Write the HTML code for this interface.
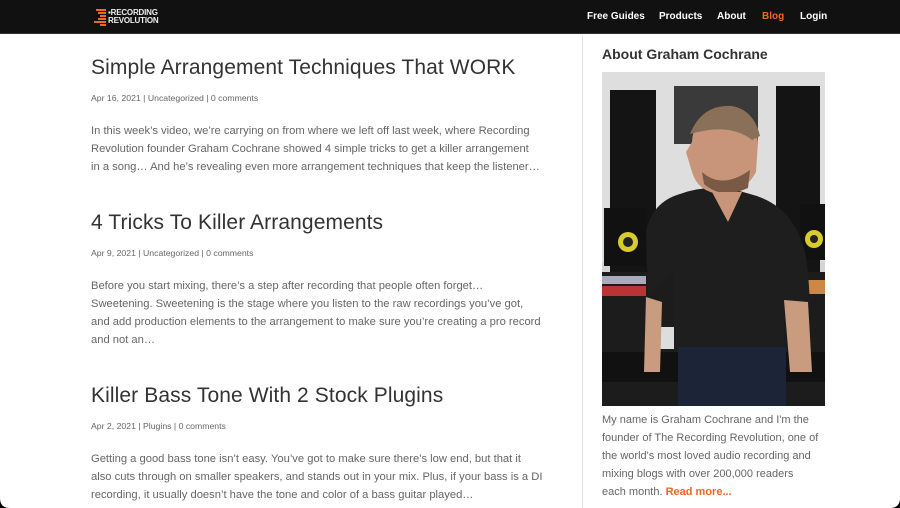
<!DOCTYPE html>
<html><head><meta charset="utf-8"><style>
*{margin:0;padding:0;box-sizing:border-box}
html,body{width:900px;height:508px;overflow:hidden;background:#fff;font-family:"Liberation Sans",sans-serif}
.hdr{position:absolute;left:0;top:0;width:900px;height:34px;background:#111;border-bottom:1px solid #333}
.logo{position:absolute;left:94px;top:9px}
.logo .t{position:absolute;left:14px;top:0;color:#eee;font-size:8px;line-height:8px;font-weight:bold;letter-spacing:-0.2px;white-space:nowrap}
.nav{position:absolute;top:11px;font-size:10px;font-weight:bold;color:#fff}
.divider{position:absolute;left:582px;top:35px;width:1px;height:473px;background:#e4e4e4}
.post{position:absolute;left:91px;width:452px}
.post h2{font-size:21px;font-weight:normal;color:#333;letter-spacing:0.1px;white-space:nowrap}
.meta{font-size:8.7px;color:#666;margin-top:13px}
.ex{font-size:11.2px;line-height:18px;color:#666;margin-top:19px}
.side{position:absolute;left:602px}
.side h3{position:absolute;left:0;top:46px;font-size:14px;font-weight:bold;color:#333;white-space:nowrap}
.bio{position:absolute;left:602px;top:411px;width:222px;font-size:11px;line-height:18px;color:#666}
.bio b{color:#f26522}
.c{position:absolute;width:10px;height:10px;bottom:0}
</style></head><body>
<div class="hdr">
 <div class="logo">
  <svg width="13" height="17" viewBox="0 0 13 17"><g fill="#f26522"><rect x="2" y="0" width="10" height="2"/><rect x="4" y="3" width="8" height="2"/><rect x="6" y="6" width="6" height="2"/><rect x="4" y="9" width="8" height="2"/><rect x="0" y="12" width="12" height="2"/><rect x="6" y="15" width="6" height="2"/></g></svg>
  <div class="t">▪RECORDING<br>REVOLUTION</div>
 </div>
 <div class="nav" style="left:587px">Free Guides</div>
 <div class="nav" style="left:659px">Products</div>
 <div class="nav" style="left:717px">About</div>
 <div class="nav" style="left:762px;color:#f26522">Blog</div>
 <div class="nav" style="left:800px">Login</div>
</div>
<div class="divider"></div>

<div class="post" style="top:56px"><h2>Simple Arrangement Techniques That WORK</h2>
<div class="meta">Apr 16, 2021 | Uncategorized | 0 comments</div>
<div class="ex">In this week’s video, we’re carrying on from where we left off last week, where Recording Revolution founder Graham Cochrane showed 4 simple tricks to get a killer arrangement<br>in a song… And he’s revealing even more arrangement techniques that keep the listener…</div></div>

<div class="post" style="top:211px"><h2>4 Tricks To Killer Arrangements</h2>
<div class="meta">Apr 9, 2021 | Uncategorized | 0 comments</div>
<div class="ex">Before you start mixing, there’s a step after recording that people often forget…<br>Sweetening. Sweetening is the stage where you listen to the raw recordings you’ve got, and add production elements to the arrangement to make sure you’re creating a pro record and not an…</div></div>

<div class="post" style="top:384px"><h2>Killer Bass Tone With 2 Stock Plugins</h2>
<div class="meta">Apr 2, 2021 | Plugins | 0 comments</div>
<div class="ex">Getting a good bass tone isn’t easy. You’ve got to make sure there’s low end, but that it also cuts through on smaller speakers, and stands out in your mix. Plus, if your bass is a DI recording, it usually doesn’t have the tone and color of a bass guitar played…</div></div>

<div class="side"><h3>About Graham Cochrane</h3></div>
<svg style="position:absolute;left:602px;top:72px" width="223" height="334" viewBox="0 0 223 334">
 <rect width="223" height="334" fill="#d4d4d4"/>
 <rect x="0" y="0" width="223" height="190" fill="#dedede"/>
 <rect x="8" y="18" width="46" height="190" fill="#141414"/>
 <rect x="174" y="14" width="44" height="190" fill="#141414"/>
 <rect x="72" y="14" width="84" height="58" fill="#3a3a3a"/>
 <rect x="0" y="200" width="223" height="134" fill="#1c1c1c"/>
 <rect x="2" y="136" width="42" height="58" fill="#111"/>
 <circle cx="26" cy="170" r="10" fill="#d8cc2a"/><circle cx="26" cy="170" r="5" fill="#222"/>
 <rect x="198" y="132" width="25" height="56" fill="#111"/>
 <circle cx="212" cy="167" r="9" fill="#d8cc2a"/><circle cx="212" cy="167" r="4" fill="#222"/>
 <rect x="0" y="214" width="44" height="10" fill="#b33"/>
 <rect x="0" y="204" width="44" height="8" fill="#aab"/>
 <rect x="200" y="208" width="23" height="14" fill="#c84"/>
 <rect x="58" y="255" width="110" height="22" fill="#ddd"/>
 <rect x="0" y="280" width="223" height="30" fill="#111"/>
 <path d="M78 122 Q110 110 148 122 Q200 135 206 200 L208 230 L182 228 L182 280 L72 280 L72 200 L46 225 L44 160 Q50 130 78 122Z" fill="#1e1e1e"/>
 <rect x="76" y="275" width="108" height="59" fill="#1c2438"/>
 <path d="M44 225 L60 230 L58 300 L42 300Z" fill="#c99c80"/>
 <path d="M182 228 L206 230 L210 300 L188 300Z" fill="#c99c80"/>
 <path d="M90 70 Q92 40 122 38 Q152 40 156 70 L154 100 Q144 120 118 122 Q96 120 90 100 L84 80Z" fill="#c9957a"/>
 <path d="M88 62 Q100 32 130 34 Q152 38 158 64 L150 68 Q130 52 96 60Z" fill="#8a7058"/>
 <path d="M100 100 Q120 118 148 98 L146 116 Q120 128 102 112Z" fill="#7a5a44"/>
 <path d="M110 120 L140 120 L126 150Z" fill="#c9957a"/>
</svg>
<div class="bio">My name is Graham Cochrane and I'm the founder of The Recording Revolution, one of the world's most loved audio recording and mixing blogs with over 200,000 readers<br>each month. <b>Read more...</b></div>
<svg class="c" style="left:0" viewBox="0 0 10 10"><path d="M0 0 Q0 10 10 10 L0 10Z" fill="#000"/></svg>
<svg class="c" style="right:0" viewBox="0 0 10 10"><path d="M10 0 Q10 10 0 10 L10 10Z" fill="#000"/></svg>
</body></html>
